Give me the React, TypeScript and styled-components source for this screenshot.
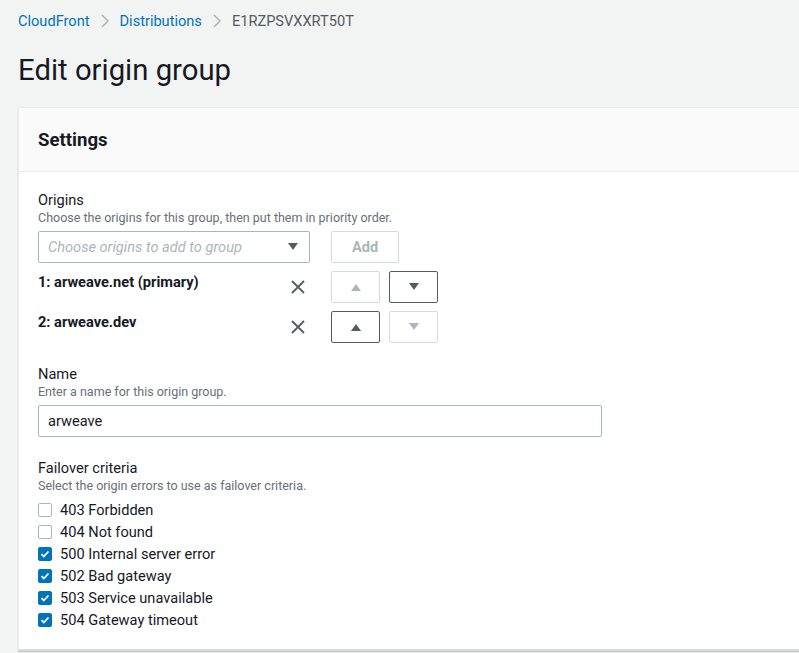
import React from "react";
import styled, { createGlobalStyle } from "styled-components";

const GlobalStyle = createGlobalStyle`
  html, body {
    margin: 0;
    padding: 0;
    background: #f2f3f3;
    font-family: Roboto, "Open Sans", Arial, sans-serif;
    color: #16191f;
  }
`;

const Page = styled.div`
  width: 799px;
  height: 653px;
  overflow: hidden;
  padding: 11px 0 0 18px;
  box-sizing: border-box;
`;

const Breadcrumbs = styled.nav`
  display: flex;
  align-items: center;
  height: 20px;
  font-size: 14.6px;
`;

const Crumb = styled.a<{ $current?: boolean }>`
  color: ${(p) => (p.$current ? "#545b64" : "#0073bb")};
  text-decoration: none;
`;

const Chevron = styled.span`
  display: inline-flex;
  margin: 0 10px;
`;

const Title = styled.h1`
  margin: 21px 0 19px;
  font-size: 29.3px;
  font-weight: 400;
  line-height: 36px;
`;

const Card = styled.section`
  background: #fff;
  border-top: 1px solid #eaeded;
  border-left: 1px solid #eaeded;
  border-bottom: 2px solid #d5dbdb;
  box-shadow: 0 1px 1px 0 rgba(0, 28, 36, 0.2);
`;

const CardHeader = styled.header`
  background: #fafafa;
  border-bottom: 1px solid #eaeded;
  height: 63px;
  padding: 0 19px;
  display: flex;
  align-items: center;
  font-size: 18.6px;
  font-weight: 700;
`;

const CardBody = styled.div`
  padding: 18px 19px 18px;
`;

const Field = styled.div`
  margin-bottom: 21px;
  &:last-child {
    margin-bottom: 0;
  }
`;

const Label = styled.div`
  font-size: 14.6px;
  line-height: 20px;
`;

const Description = styled.div`
  font-size: 12.5px;
  line-height: 16px;
  color: #687078;
  margin-bottom: 5px;
`;

const Row = styled.div`
  display: flex;
  align-items: center;
`;

const Select = styled.div`
  width: 272px;
  height: 32px;
  box-sizing: border-box;
  border: 1px solid #aab7b8;
  border-radius: 2px;
  display: flex;
  align-items: center;
  justify-content: space-between;
  padding: 0 10px 0 9px;
  font-size: 14.6px;
  font-style: italic;
  color: #aab7b8;
`;

const Button = styled.button<{ $width: number; $disabled?: boolean }>`
  width: ${(p) => p.$width}px;
  height: 32px;
  box-sizing: border-box;
  border: 1px solid ${(p) => (p.$disabled ? "#d5dbdb" : "#545b64")};
  border-radius: 2px;
  background: #fff;
  color: ${(p) => (p.$disabled ? "#aab7b8" : "#545b64")};
  font-family: inherit;
  font-size: 14.6px;
  font-weight: 700;
  display: flex;
  align-items: center;
  justify-content: center;
  padding: 0;
`;

const OriginRow = styled.div`
  display: flex;
  align-items: center;
  margin-top: 8px;
  height: 32px;
`;

const OriginName = styled.div`
  width: 245px;
  font-size: 14.6px;
  line-height: 20px;
  font-weight: 700;
  align-self: flex-start;
  margin-top: 1px;
`;

const RemoveIcon = styled.span`
  width: 48px;
  display: flex;
  align-items: center;
  padding-left: 7px;
  box-sizing: border-box;
`;

const Gap = styled.span<{ $w: number }>`
  width: ${(p) => p.$w}px;
`;

const TextInput = styled.div`
  width: 564px;
  height: 32px;
  box-sizing: border-box;
  border: 1px solid #aab7b8;
  border-radius: 2px;
  display: flex;
  align-items: center;
  padding: 0 9px;
  font-size: 14.6px;
`;

const CheckList = styled.div`
  display: flex;
  flex-direction: column;
`;

const CheckItem = styled.label`
  display: flex;
  align-items: center;
  height: 22px;
  font-size: 14.6px;
`;

const Box = styled.span<{ $checked: boolean }>`
  width: 14px;
  height: 14px;
  box-sizing: border-box;
  border-radius: 2px;
  margin-right: 8px;
  border: 1px solid ${(p) => (p.$checked ? "#0073bb" : "#aab7b8")};
  background: ${(p) => (p.$checked ? "#0073bb" : "#fff")};
  display: flex;
  align-items: center;
  justify-content: center;
`;

const ChevronIcon = () => (
  <svg width="10" height="16" viewBox="0 0 10 16">
    <path d="M2 2l6 6-6 6" fill="none" stroke="#aab7b8" strokeWidth="1.5" />
  </svg>
);

const Triangle = ({ up, color }: { up?: boolean; color: string }) => (
  <svg width="12" height="10" viewBox="0 0 12 10">
    <path d={up ? "M1 9h10L6 2z" : "M1 1h10L6 8z"} fill={color} />
  </svg>
);

const XIcon = () => (
  <svg width="16" height="16" viewBox="0 0 16 16">
    <path d="M2 2l12 12M14 2L2 14" stroke="#545b64" strokeWidth="1.8" />
  </svg>
);

const Check = () => (
  <svg width="10" height="10" viewBox="0 0 10 10">
    <path d="M1.5 5.2l2.3 2.3L8.5 2.5" fill="none" stroke="#fff" strokeWidth="1.8" />
  </svg>
);

const criteria = [
  { label: "403 Forbidden", checked: false },
  { label: "404 Not found", checked: false },
  { label: "500 Internal server error", checked: true },
  { label: "502 Bad gateway", checked: true },
  { label: "503 Service unavailable", checked: true },
  { label: "504 Gateway timeout", checked: true },
];

const origins = [
  { name: "1: arweave.net (primary)", canUp: false, canDown: true },
  { name: "2: arweave.dev", canUp: true, canDown: false },
];

export default function App() {
  return (
    <>
      <GlobalStyle />
      <Page>
        <Breadcrumbs>
          <Crumb>CloudFront</Crumb>
          <Chevron>
            <ChevronIcon />
          </Chevron>
          <Crumb>Distributions</Crumb>
          <Chevron>
            <ChevronIcon />
          </Chevron>
          <Crumb $current>E1RZPSVXXRT50T</Crumb>
        </Breadcrumbs>
        <Title>Edit origin group</Title>
        <Card>
          <CardHeader>Settings</CardHeader>
          <CardBody>
            <Field>
              <Label>Origins</Label>
              <Description>Choose the origins for this group, then put them in priority order.</Description>
              <Row>
                <Select>
                  Choose origins to add to group
                  <Triangle color="#545b64" />
                </Select>
                <Gap $w={21} />
                <Button $width={68} $disabled>
                  Add
                </Button>
              </Row>
              {origins.map((o) => (
                <OriginRow key={o.name}>
                  <OriginName>{o.name}</OriginName>
                  <RemoveIcon>
                    <XIcon />
                  </RemoveIcon>
                  <Button $width={49} $disabled={!o.canUp}>
                    <Triangle up color={o.canUp ? "#545b64" : "#aab7b8"} />
                  </Button>
                  <Gap $w={9} />
                  <Button $width={49} $disabled={!o.canDown}>
                    <Triangle color={o.canDown ? "#545b64" : "#aab7b8"} />
                  </Button>
                </OriginRow>
              ))}
            </Field>
            <Field>
              <Label>Name</Label>
              <Description>Enter a name for this origin group.</Description>
              <TextInput>arweave</TextInput>
            </Field>
            <Field>
              <Label>Failover criteria</Label>
              <Description>Select the origin errors to use as failover criteria.</Description>
              <CheckList>
                {criteria.map((c) => (
                  <CheckItem key={c.label}>
                    <Box $checked={c.checked}>{c.checked && <Check />}</Box>
                    {c.label}
                  </CheckItem>
                ))}
              </CheckList>
            </Field>
          </CardBody>
        </Card>
      </Page>
    </>
  );
}
